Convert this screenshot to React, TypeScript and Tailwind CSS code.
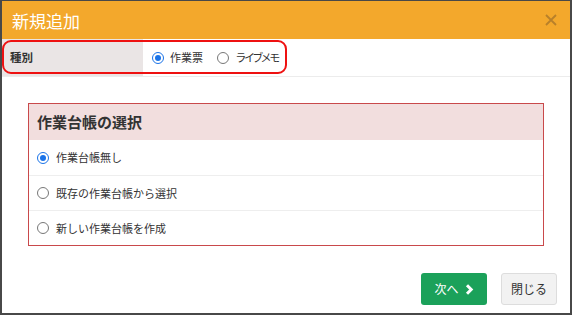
import React from "react";

const font = { fontFamily: '"Noto Sans CJK JP", "Noto Sans", sans-serif' };

function Radio({ checked, className = "" }: { checked?: boolean; className?: string }) {
  return checked ? (
    <span className={`flex h-[12px] w-[12px] shrink-0 items-center justify-center rounded-full border-[1.5px] border-[#1a73e8] bg-white ${className}`}>
      <span className="h-[6px] w-[6px] rounded-full bg-[#1a73e8]" />
    </span>
  ) : (
    <span className={`block h-[12px] w-[12px] shrink-0 rounded-full border border-[#777] bg-white ${className}`} />
  );
}

export default function App() {
  return (
    <div
      style={font}
      className="flex h-[315px] w-[572px] flex-col border-x-2 border-b-2 border-t border-[#484848] bg-white text-[#333]"
    >
      <div className="flex h-[38px] shrink-0 items-center justify-between bg-[#f3a82c] pl-[10px] pr-[12px]">
        <span className="text-[17px] leading-none text-white">新規追加</span>
        <svg width="12" height="12" viewBox="0 0 12 12" className="mr-[1px]">
          <path d="M1 1 L11 11 M11 1 L1 11" stroke="#b8802a" strokeWidth="1.8" />
        </svg>
      </div>
      <div className="relative flex h-[38px] shrink-0 border-b border-[#ececec]">
        <div className="flex w-[141px] items-center bg-[#eae5e5] pl-[8px] text-[11.5px] font-bold text-[#333]">
          種別
        </div>
        <div className="flex items-center pl-[9px] text-[11px]">
          <Radio checked />
          <span className="ml-[6px]">作業票</span>
          <Radio className="ml-[14px]" />
          <span className="ml-[7px] tracking-[-1.2px] [font-feature-settings:'palt']">ライブメモ</span>
        </div>
        <div className="pointer-events-none absolute left-0 top-[1px] h-[34px] w-[285px] rounded-[9px] border-2 border-[#ee1111]" />
      </div>
      <div className="px-[26px] pt-[26px]">
        <div className="border border-[#c9494b]">
          <div className="flex h-[36px] items-center bg-[#f2dede] pl-[8px] text-[15px] font-bold text-[#333]">
            作業台帳の選択
          </div>
          {["作業台帳無し", "既存の作業台帳から選択", "新しい作業台帳を作成"].map((t, i) => (
            <div
              key={t}
              className={`flex h-[35px] items-center pl-[8px] text-[11px] ${i > 0 ? "border-t border-[#eeeeee]" : ""}`}
            >
              <Radio checked={i === 0} />
              <span className="ml-[7px]">{t}</span>
            </div>
          ))}
        </div>
      </div>
      <div className="mt-[27px] flex justify-end gap-[14px] pr-[13px]">
        <button className="flex h-[32px] w-[66px] items-center justify-center gap-[6px] rounded-[3px] bg-[#1ba15a] text-[12px] text-white">
          次へ
          <svg width="9" height="11" viewBox="0 0 9 11">
            <path d="M2 1.2 L6.2 5.5 L2 9.8" stroke="white" strokeWidth="3" fill="none" />
          </svg>
        </button>
        <button className="flex h-[32px] w-[56px] items-center justify-center rounded-[3px] border border-[#dddddd] bg-[#f2f2f2] text-[12px] text-[#333]">
          閉じる
        </button>
      </div>
    </div>
  );
}
